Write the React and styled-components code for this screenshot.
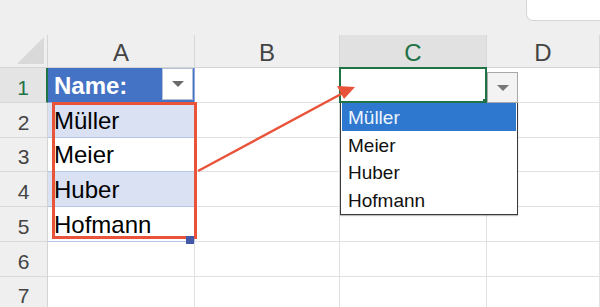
import React from 'react'
import styled, { createGlobalStyle, css } from 'styled-components'

const GlobalStyle = createGlobalStyle`
  html, body {
    margin: 0;
    padding: 0;
    background: #efefef;
  }
  * { box-sizing: border-box; }
`

const Page = styled.div`
  width: 600px;
  height: 307px;
  overflow: hidden;
  background: #efefef;
  font-family: "Liberation Sans", Arial, sans-serif;
`

const TopBar = styled.div`
  height: 35px;
  display: flex;
  justify-content: flex-end;
  align-items: flex-start;
`

const SearchBox = styled.div`
  width: 74px;
  height: 21px;
  background: #fff;
  border-left: 1px solid #d6d6d6;
  border-bottom: 1px solid #d6d6d6;
  border-bottom-left-radius: 7px;
`

const Sheet = styled.div`
  position: relative;
  display: grid;
  grid-template-columns: 48px 147px 145px 147px 113px;
  grid-template-rows: 33px repeat(7, 34.75px);
  background: #fff;
`

const Corner = styled.div`
  background: #efefef;
  border-right: 1px solid #d4d4d4;
  border-bottom: 1px solid #d4d4d4;
  display: flex;
  align-items: flex-end;
  justify-content: flex-end;
  padding: 0 3px 3px 0;
`

const CornerTriangle = styled.div`
  width: 27px;
  height: 27px;
  background: #d9d9d9;
  clip-path: polygon(100% 0, 100% 100%, 0 100%);
`

const ColHeader = styled.div`
  background: ${p => (p.$active ? '#e1e1e1' : '#efefef')};
  color: ${p => (p.$active ? '#217346' : '#444')};
  border-right: 1px solid #d8d8d8;
  border-bottom: 1px solid #d4d4d4;
  display: flex;
  align-items: flex-end;
  justify-content: center;
  padding-bottom: 2px;
  font-size: 24px;
  line-height: 24px;
`

const RowHeader = styled.div`
  background: ${p => (p.$active ? '#e4e4e4' : '#efefef')};
  color: ${p => (p.$active ? '#217346' : '#444')};
  border-right: ${p => (p.$active ? '2px solid #217346' : '1px solid #d4d4d4')};
  border-bottom: 1px solid #d8d8d8;
  display: flex;
  align-items: flex-end;
  justify-content: center;
  padding-bottom: 4px;
  font-size: 21px;
  line-height: 21px;
`

const variants = {
  head: css`
    background: #4472c4;
    color: #fff;
    font-weight: bold;
    padding-right: 1px;
    border-right: 1px solid #8ea9db;
    border-bottom: 1px solid #8ea9db;
  `,
  band: css`
    background: #d9e1f2;
    border-right: 1px solid #b4c6e7;
    border-bottom: 1px solid #b4c6e7;
  `,
  row: css`
    background: #fff;
    border-right: 1px solid #b4c6e7;
    border-bottom: 1px solid #b4c6e7;
  `,
  plain: css`
    background: #fff;
    border-right: 1px solid #e1e1e1;
    border-bottom: 1px solid #e1e1e1;
  `,
}

const Cell = styled.div`
  position: relative;
  display: flex;
  align-items: flex-end;
  justify-content: space-between;
  padding: 0 5px 4px 6px;
  font-size: 24px;
  line-height: 24px;
  color: #000;
  ${p => variants[p.$variant || 'plain']}
`

const FilterButton = styled.div`
  align-self: center;
  margin-bottom: -3px;
  width: 31px;
  height: 32px;
  background: #fff;
  border: 1px solid #b4c0d8;
  display: flex;
  align-items: center;
  justify-content: center;
`

const Caret = styled.div`
  width: 0;
  height: 0;
  border-left: 6px solid transparent;
  border-right: 6px solid transparent;
  border-top: 6px solid ${p => p.$color || '#666'};
`

const ActiveFrame = styled.div`
  position: absolute;
  inset: -1px;
  border: 2px solid #217346;
  pointer-events: none;
  z-index: 2;
`

const FillHandle = styled.div`
  position: absolute;
  width: ${p => p.$size || 6}px;
  height: ${p => p.$size || 6}px;
  right: ${p => p.$right ?? -3}px;
  bottom: ${p => p.$bottom ?? -3}px;
  background: ${p => p.$color};
  z-index: 3;
`

const DropButton = styled.div`
  position: absolute;
  left: 147px;
  top: 4px;
  width: 31px;
  height: 31px;
  background: #f3f3f3;
  border: 1px solid #a8a8a8;
  display: flex;
  align-items: center;
  justify-content: center;
  z-index: 3;
`

const DropList = styled.ul`
  position: absolute;
  left: 0;
  top: 35px;
  width: 178px;
  margin: 0;
  padding: 0 0 1px;
  list-style: none;
  background: #fff;
  border: 1px solid #3a3a3a;
  border-top: none;
  box-shadow: 0 1px 1px rgba(0, 0, 0, 0.25);
  z-index: 4;
`

const DropItem = styled.li`
  height: 27.5px;
  padding: 2px 0 0 6px;
  font-size: 19px;
  line-height: 25px;
  color: ${p => (p.$selected ? '#eef4fc' : '#111')};
  background: ${p => (p.$selected ? '#2e78d0' : 'transparent')};
  margin: 0 1px;
`

const Highlight = styled.div`
  position: absolute;
  left: 52px;
  top: 67px;
  width: 145px;
  height: 137px;
  border: 3px solid #e9533a;
  pointer-events: none;
  z-index: 2;
`

const ArrowLayer = styled.svg`
  position: absolute;
  left: 0;
  top: 0;
  width: 600px;
  height: 272px;
  pointer-events: none;
  z-index: 5;
`

const columns = ['A', 'B', 'C', 'D']
const names = ['Müller', 'Meier', 'Huber', 'Hofmann']

export default function App() {
  const rows = [1, 2, 3, 4, 5, 6, 7]

  const renderA = r => {
    if (r === 1) {
      return (
        <Cell key="a" $variant="head">
          Name:
          <FilterButton>
            <Caret $color="#6b6b6b" />
          </FilterButton>
        </Cell>
      )
    }
    if (r <= 5) {
      return (
        <Cell key="a" $variant={r % 2 === 0 ? 'band' : 'row'}>
          {names[r - 2]}
          {r === 5 && <FillHandle $color="#4458a8" $size={8} $right={0} $bottom={-3} />}
        </Cell>
      )
    }
    return <Cell key="a" />
  }

  const renderC = r => {
    if (r !== 1) return <Cell key="c" />
    return (
      <Cell key="c">
        <ActiveFrame />
        <FillHandle $color="#217346" />
        <DropButton>
          <Caret $color="#777" />
        </DropButton>
        <DropList>
          {names.map((n, i) => (
            <DropItem key={n} $selected={i === 0}>{n}</DropItem>
          ))}
        </DropList>
      </Cell>
    )
  }

  return (
    <Page>
      <GlobalStyle />
      <TopBar>
        <SearchBox />
      </TopBar>
      <Sheet>
        <Corner>
          <CornerTriangle />
        </Corner>
        {columns.map(c => (
          <ColHeader key={c} $active={c === 'C'}>{c}</ColHeader>
        ))}
        {rows.map(r => (
          <React.Fragment key={r}>
            <RowHeader $active={r === 1}>{r}</RowHeader>
            {renderA(r)}
            <Cell />
            {renderC(r)}
            <Cell />
          </React.Fragment>
        ))}
        <Highlight />
        <ArrowLayer viewBox="0 0 600 272">
          <line x1="198" y1="136" x2="343" y2="58" stroke="#e9533a" strokeWidth="2.5" />
          <polygon points="355,52 337,51 344,64" fill="#e9533a" />
        </ArrowLayer>
      </Sheet>
    </Page>
  )
}
